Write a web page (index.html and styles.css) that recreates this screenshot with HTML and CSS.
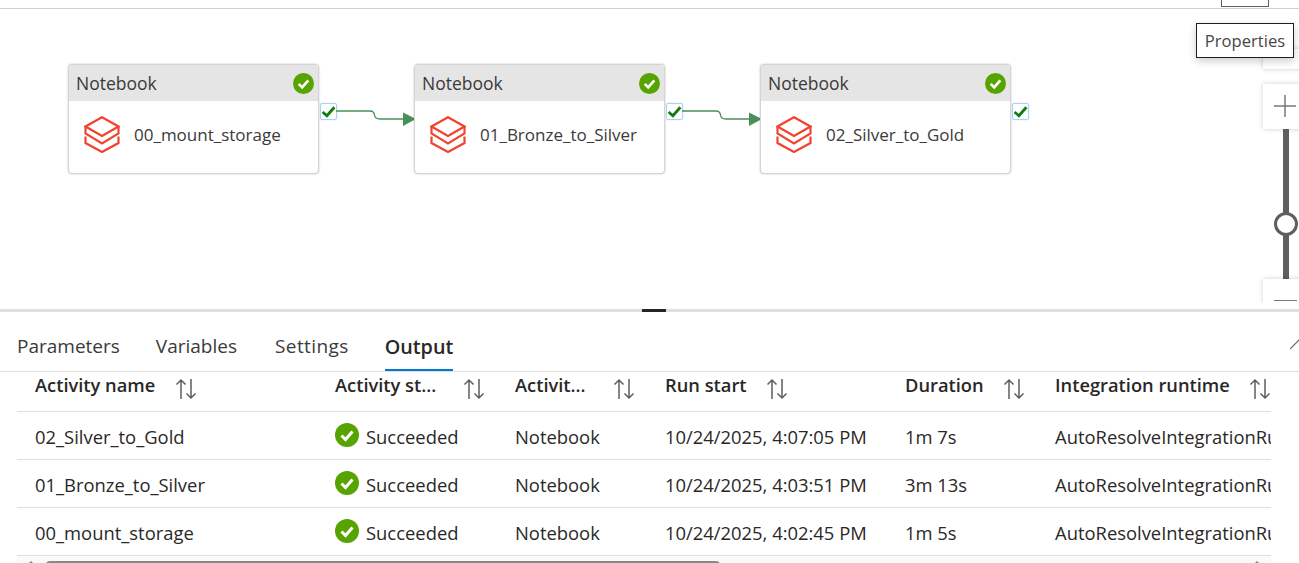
FILE: index.html
```html
<!DOCTYPE html>
<html>
<head>
  <title>Pipeline run</title>
  <link rel="stylesheet" href="styles.css">
</head>
<body>
  <svg class="defs" width="0" height="0">
    <symbol id="bricks" viewBox="0 0 36 37">
      <path d="M18 1.200 L34.500 10.500 L18 20 L1.500 10.500 Z" fill="none" stroke="#f2432c" stroke-width="2.200"/>
      <path d="M1.500 10.500 V17.500 L18 27.500 L34.500 17.500 V10.500" fill="none" stroke="#f2432c" stroke-width="2.200"/>
      <path d="M1.500 20.500 V27 L18 36 L34.500 27 V20.500" fill="none" stroke="#f2432c" stroke-width="2.200"/>
    </symbol>
    <symbol id="ok" viewBox="0 0 24 24">
      <circle cx="12" cy="12" r="12" fill="#57a300"/>
      <path d="M6.500 12.500 L10.500 16.500 L17.500 8.500" fill="none" stroke="#fff" stroke-width="3"/>
    </symbol>
    <symbol id="sort" viewBox="0 0 22 22">
      <path d="M6 21 V2 M1.500 6.500 L6 2 L10.500 6.500 M16 1 V20 M11.500 15.500 L16 20 L20.500 15.500" fill="none" stroke="#605e5c" stroke-width="1.500"/>
    </symbol>
  </svg>

  <div class="topbar"><div class="top-btn"></div></div>

  <section class="canvas">
    <div class="node node-1">
      <div class="node-head"><span>Notebook</span><svg class="node-ok"><use href="#ok"/></svg></div>
      <div class="node-body"><svg class="bricks"><use href="#bricks"/></svg><span>00_mount_storage</span></div>
    </div>
    <div class="port port-1"><svg viewBox="0 0 14 14"><path d="M1.500 7.500 L5.500 11 L12.500 3" fill="none" stroke="#107c10" stroke-width="2.600"/></svg></div>
    <svg class="link link-1" viewBox="0 0 80 20"><path d="M0 2 H34 Q38 2 38.500 6 Q39 10 44 10 H68" fill="none" stroke="#4a8f55" stroke-width="1.300"/><path d="M67 3.500 L80 10 L67 17 Z" fill="#4a8f55"/></svg>

    <div class="node node-2">
      <div class="node-head"><span>Notebook</span><svg class="node-ok"><use href="#ok"/></svg></div>
      <div class="node-body"><svg class="bricks"><use href="#bricks"/></svg><span>01_Bronze_to_Silver</span></div>
    </div>
    <div class="port port-2"><svg viewBox="0 0 14 14"><path d="M1.500 7.500 L5.500 11 L12.500 3" fill="none" stroke="#107c10" stroke-width="2.600"/></svg></div>
    <svg class="link link-2" viewBox="0 0 80 20"><path d="M0 2 H34 Q38 2 38.500 6 Q39 10 44 10 H68" fill="none" stroke="#4a8f55" stroke-width="1.300"/><path d="M67 3.500 L80 10 L67 17 Z" fill="#4a8f55"/></svg>

    <div class="node node-3">
      <div class="node-head"><span>Notebook</span><svg class="node-ok"><use href="#ok"/></svg></div>
      <div class="node-body"><svg class="bricks"><use href="#bricks"/></svg><span>02_Silver_to_Gold</span></div>
    </div>
    <div class="port port-3"><svg viewBox="0 0 14 14"><path d="M1.500 7.500 L5.500 11 L12.500 3" fill="none" stroke="#107c10" stroke-width="2.600"/></svg></div>

    <div class="zoom-btn zoom-top"></div>
    <div class="zoom-btn zoom-plus"><svg viewBox="0 0 22 22"><path d="M11 0 V22 M0 11 H22" stroke="#7a7a7a" stroke-width="1.500"/></svg></div>
    <div class="zoom-track"></div>
    <div class="zoom-thumb"></div>
    <div class="zoom-btn zoom-minus"><span></span></div>

    <div class="tooltip">Properties</div>
  </section>

  <div class="splitter"><span class="grip"></span></div>

  <section class="panel">
    <nav class="tabs">
      <a href="#">Parameters</a>
      <a href="#">Variables</a>
      <a href="#" class="tab-settings">Settings</a>
      <a href="#" class="active">Output</a>
      <svg class="expand" viewBox="0 0 10 10"><path d="M0 10 L10 0" stroke="#605e5c" stroke-width="1.200"/></svg>
    </nav>

    <div class="table">
      <div class="row head">
        <div class="cell c-name"><b>Activity name</b><svg class="sort"><use href="#sort"/></svg></div>
        <div class="cell c-status"><b>Activity st...</b><svg class="sort"><use href="#sort"/></svg></div>
        <div class="cell c-type"><b>Activit...</b><svg class="sort"><use href="#sort"/></svg></div>
        <div class="cell c-start"><b>Run start</b><svg class="sort"><use href="#sort"/></svg></div>
        <div class="cell c-dur"><b>Duration</b><svg class="sort"><use href="#sort"/></svg></div>
        <div class="cell c-rt"><b>Integration runtime</b><svg class="sort"><use href="#sort"/></svg></div>
      </div>
      <div class="row">
        <div class="cell c-name">02_Silver_to_Gold</div>
        <div class="cell c-status"><svg class="status-ok"><use href="#ok"/></svg><span>Succeeded</span></div>
        <div class="cell c-type">Notebook</div>
        <div class="cell c-start">10/24/2025, 4:07:05 PM</div>
        <div class="cell c-dur">1m 7s</div>
        <div class="cell c-rt">AutoResolveIntegrationRuntime</div>
      </div>
      <div class="row">
        <div class="cell c-name">01_Bronze_to_Silver</div>
        <div class="cell c-status"><svg class="status-ok"><use href="#ok"/></svg><span>Succeeded</span></div>
        <div class="cell c-type">Notebook</div>
        <div class="cell c-start">10/24/2025, 4:03:51 PM</div>
        <div class="cell c-dur">3m 13s</div>
        <div class="cell c-rt">AutoResolveIntegrationRuntime</div>
      </div>
      <div class="row">
        <div class="cell c-name">00_mount_storage</div>
        <div class="cell c-status"><svg class="status-ok"><use href="#ok"/></svg><span>Succeeded</span></div>
        <div class="cell c-type">Notebook</div>
        <div class="cell c-start">10/24/2025, 4:02:45 PM</div>
        <div class="cell c-dur">1m 5s</div>
        <div class="cell c-rt">AutoResolveIntegrationRuntime</div>
      </div>
    </div>
    <div class="scrollbar">
      <span class="arrow-left"></span>
      <span class="scroll-thumb"></span>
      <span class="arrow-right"></span>
    </div>
  </section>
</body>
</html>
```

FILE: styles.css
```css
html, body {
  margin: 0;
  padding: 0;
  height: 563px;
  overflow: hidden;
}
body {
  font-family: "Open Sans", "Noto Sans", Arial, sans-serif;
  font-size: 18px;
  color: #292827;
  background-color: #fff;
}
.defs {
  position: absolute;
}

.topbar {
  height: 8px;
}
.top-btn {
  width: 48px;
  height: 7px;
  margin-left: 1221px;
  box-sizing: border-box;
  border: 1px solid #605e5c;
  border-top: 0;
}

/* pipeline canvas */
.canvas {
  position: relative;
  height: 301px;
  overflow: hidden;
  box-sizing: border-box;
  border-top: 1px solid #d2d0ce;
}
.node {
  position: absolute;
  top: 55px;
  width: 251px;
  height: 110px;
  box-sizing: border-box;
  border: 1px solid #d4d4d4;
  border-radius: 4px;
  box-shadow: 0 0 2px rgba(0, 0, 0, 0.25);
  background-color: #fff;
}
.node-1 { left: 68px; }
.node-2 { left: 414px; }
.node-3 { left: 760px; }
.node-head {
  display: flex;
  align-items: center;
  justify-content: space-between;
  height: 36px;
  padding: 0 4px 0 7px;
  background-color: #e5e5e5;
  font-size: 17.500px;
  color: #3b3a39;
}
.node-ok {
  width: 21px;
  height: 21px;
}
.node-body {
  display: flex;
  align-items: center;
  gap: 14px;
  height: 66px;
  padding-left: 15px;
  font-size: 17px;
  color: #3b3a39;
}
.bricks {
  width: 36px;
  height: 37px;
}
.port {
  position: absolute;
  top: 94px;
  width: 17px;
  height: 17px;
  box-sizing: border-box;
  background-color: #fff;
  border: 1px solid #a9d3f2;
  border-radius: 2px;
  box-shadow: 0 0 2px #cfe6f8;
  display: flex;
}
.port svg {
  width: 15px;
  height: 15px;
}
.port-1 { left: 320px; }
.port-2 { left: 666px; }
.port-3 { left: 1012px; }
.link {
  position: absolute;
  top: 100px;
  width: 80px;
  height: 20px;
}
.link-1 { left: 336px; }
.link-2 { left: 682px; }
.zoom-btn {
  position: absolute;
  left: 1263px;
  width: 40px;
  background-color: #fff;
  box-shadow: 0 0 5px rgba(0, 0, 0, 0.2);
}
.zoom-top {
  top: 40px;
  height: 20px;
}
.zoom-plus {
  top: 75px;
  height: 45px;
  display: flex;
  align-items: center;
  padding: 0 0 2px 11px;
  box-sizing: border-box;
}
.zoom-plus svg {
  width: 22px;
  height: 22px;
}
.zoom-track {
  position: absolute;
  left: 1283px;
  top: 120px;
  width: 6px;
  height: 150px;
  background-color: #605e5c;
}
.zoom-thumb {
  position: absolute;
  left: 1274px;
  top: 203px;
  width: 24px;
  height: 24px;
  box-sizing: border-box;
  border: 3px solid #605e5c;
  border-radius: 50%;
  background-color: #fff;
}
.zoom-minus {
  top: 270px;
  height: 24px;
  clip-path: inset(-6px -6px 0 -6px);
}
.zoom-minus span {
  display: block;
  width: 23px;
  height: 1px;
  margin-left: 11px;
  position: relative;
  top: 21px;
  background-color: #7a7a7a;
}
.tooltip {
  position: absolute;
  left: 1196px;
  top: 14px;
  width: 98px;
  height: 35px;
  box-sizing: border-box;
  border: 1px solid #201f1e;
  background-color: #fff;
  box-shadow: 0 3px 8px rgba(0, 0, 0, 0.2);
  font-size: 16.600px;
  line-height: 33px;
  text-align: center;
  color: #484644;
}

/* splitter */
.splitter {
  position: relative;
  height: 3px;
  background-color: #e1dfdd;
}
.grip {
  position: absolute;
  left: 642px;
  top: 0;
  width: 24px;
  height: 3px;
  background-color: #252423;
}

/* bottom panel */
.panel {
  height: 251px;
  overflow: hidden;
}
.tabs {
  position: relative;
  display: flex;
  gap: 36px;
  height: 60px;
  box-sizing: border-box;
  padding-left: 17px;
  border-bottom: 1px solid #e1dfdd;
}
.tabs a {
  display: block;
  margin-top: 17px;
  height: 42px;
  line-height: 35px;
  font-size: 19px;
  color: #3b3a39;
  text-decoration: none;
  box-sizing: border-box;
}
.tabs a.tab-settings {
  margin-left: 2px;
  letter-spacing: 0.4px;
}
.tabs a.active {
  font-size: 19.800px;
  font-weight: 600;
  color: #292827;
  border-bottom: 2px solid #0078d4;
}
.expand {
  position: absolute;
  left: 1290px;
  top: 27px;
  width: 10px;
  height: 10px;
}
.table {
  width: 1254px;
  margin-left: 17px;
  overflow: hidden;
}
.row {
  display: flex;
  height: 48px;
  box-sizing: border-box;
  border-bottom: 1px solid #e1dfdd;
  align-items: center;
  padding-top: 1px;
}
.row.head {
  height: 40px;
  padding-top: 0;
  padding-bottom: 15px;
}
.cell {
  display: flex;
  flex: none;
  align-items: center;
  box-sizing: border-box;
  padding-left: 18px;
  white-space: nowrap;
  font-size: 18.400px;
}
.cell b {
  font-weight: 600;
  font-size: 18.300px;
}
.c-name { width: 300px; }
.c-status { width: 180px; }
.c-type { width: 150px; }
.c-start { width: 240px; }
.c-dur { width: 150px; }
.c-rt { width: 300px; }
.sort {
  width: 22px;
  height: 22px;
  margin-left: 19px;
  margin-top: 9px;
}
.c-name .sort { margin-left: 20px; }
.c-status .sort,
.c-type .sort { margin-left: 27px; }
.status-ok {
  width: 24px;
  height: 24px;
  margin-right: 7px;
  margin-top: -2px;
}
.scrollbar {
  display: flex;
  align-items: flex-start;
  height: 8px;
  margin-left: 17px;
  padding-top: 5px;
  width: 1254px;
  background-color: #f9f9f9;
}
.arrow-left,
.arrow-right {
  flex: none;
  width: 0;
  height: 0;
  border-left: 4px solid transparent;
  border-right: 4px solid transparent;
  border-bottom: 4px solid #8a8886;
}
.arrow-left {
  margin-left: 10px;
}
.arrow-right {
  margin-left: 533px;
}
.scroll-thumb {
  flex: none;
  width: 674px;
  height: 8px;
  margin-left: 11px;
  border-radius: 4px;
  background-color: #8a8886;
}
```
